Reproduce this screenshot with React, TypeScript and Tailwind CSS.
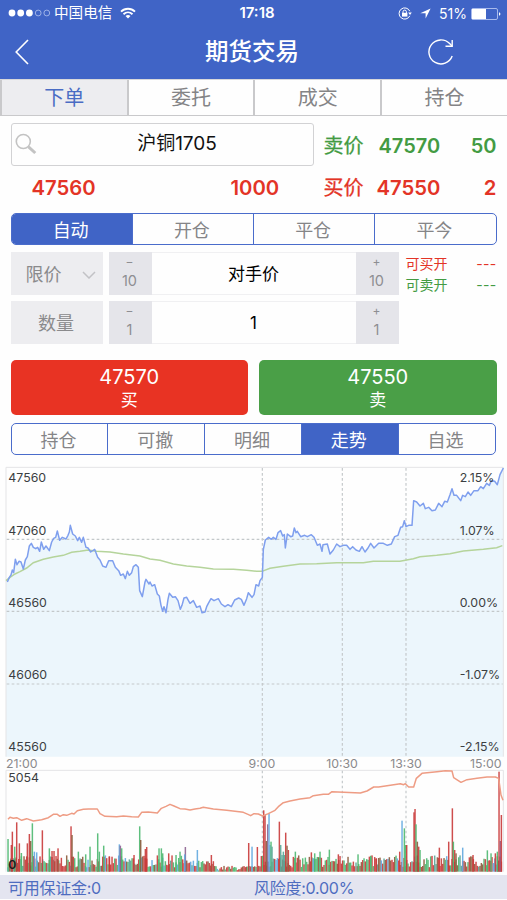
import React from "react";

/* Chart data lives in a 1521 x 1245 space, three units per pixel. */
const PRICE: number[][] = [
  [22,366],[28,352],[33,345],[37,330],[41,338],[46,298],[51,314],[57,304],[63,306],[70,327],[76,300],[82,290],[88,258],[94,250],[100,262],[107,266],[113,262],[119,274],[124,246],[131,268],[138,258],[148,272],[155,246],[161,235],[167,232],[172,213],[179,241],[187,232],[198,237],[204,226],[208,216],[211,196],[218,222],[226,228],[233,242],[238,232],[245,247],[250,232],[258,262],[264,264],[272,276],[284,268],[293,292],[300,300],[308,318],[318,322],[326,302],[338,302],[346,322],[356,332],[362,346],[370,342],[376,356],[382,334],[388,346],[395,338],[400,320],[408,314],[415,322],[419,392],[427,410],[435,366],[438,358],[447,372],[450,366],[456,378],[464,374],[472,402],[478,408],[483,436],[488,454],[492,440],[498,458],[504,418],[508,400],[518,412],[526,410],[534,422],[541,448],[546,436],[552,414],[560,412],[570,430],[580,422],[590,442],[600,438],[606,458],[615,456],[620,440],[625,430],[633,416],[642,422],[655,416],[664,432],[675,440],[684,434],[694,440],[704,420],[716,414],[724,418],[732,436],[740,416],[745,398],[756,412],[762,404],[768,374],[776,378],[780,362],
  [787,352],[790,268],[796,240],[806,232],[814,238],[820,232],[828,238],[834,218],[842,212],[848,228],[853,224],[856,264],[862,222],[872,230],[878,228],[883,204],[888,218],[892,214],[902,230],[914,226],[922,230],[934,224],[942,232],[952,256],[960,252],[966,274],[969,254],[982,252],[990,282],[1000,270],[1010,252],[1020,260],[1030,256],[1040,256],[1050,268],[1058,260],[1068,270],[1078,274],[1086,260],[1095,276],[1104,264],[1112,250],[1122,264],[1136,250],[1150,250],[1162,256],[1174,252],[1184,230],[1194,226],[1202,202],[1208,200],[1213,182],[1218,200],[1226,196],[1236,196],[1241,122],[1250,126],[1260,138],[1270,130],[1276,146],[1286,142],[1296,152],[1306,150],[1316,130],[1326,140],[1334,124],[1342,126],[1350,104],[1356,86],[1362,106],[1370,106],[1382,122],[1388,106],[1396,110],[1404,96],[1412,106],[1422,92],[1434,92],[1442,80],[1450,86],[1460,70],[1468,76],[1474,62],[1484,64],[1492,74],[1500,44],[1510,24],
];

const AVERAGE: number[][] = [
  [18,362],[30,352],[45,342],[60,335],[80,324],[100,308],[130,298],[160,291],[190,286],[215,277],[240,274],[265,270],[290,274],[330,276],[370,282],[420,288],[450,297],[480,301],[520,312],[560,318],[600,322],[640,327],[700,328],[740,331],[770,334],[786,334],[810,325],[850,319],[900,312],[950,311],[1010,308],[1090,308],[1120,304],[1200,304],[1240,296],[1260,290],[1310,286],[1350,281],[1390,273],[1450,268],[1490,263],[1507,257],
];

const OPEN_INTEREST: number[][] = [
  [24,1078],[30,1072],[40,1075],[50,1073],[65,1081],[80,1076],[100,1083],[125,1079],[145,1073],[160,1063],[172,1063],[180,1069],[190,1064],[200,1066],[215,1060],[222,1062],[232,1052],[250,1048],[265,1047],[292,1047],[300,1061],[315,1069],[350,1070],[370,1068],[395,1070],[415,1071],[425,1057],[445,1056],[472,1059],[484,1045],[498,1039],[510,1033],[522,1038],[540,1046],[555,1047],[570,1050],[585,1047],[600,1045],[610,1042],[640,1047],[680,1051],[730,1057],[744,1063],[752,1067],[762,1061],[775,1062],[788,1068],[805,1061],[825,1051],[835,1040],[850,1028],[870,1023],[900,1017],[930,1013],[940,1007],[970,1003],[985,1003],[996,995],[1031,997],[1081,999],[1101,993],[1121,981],[1136,981],[1161,977],[1201,971],[1211,974],[1216,971],[1226,981],[1241,981],[1249,955],[1266,940],[1311,935],[1336,932],[1356,933],[1361,953],[1383,967],[1401,959],[1431,955],[1461,951],[1486,951],[1496,955],[1503,1005],[1509,1021],
];

const RED = "#c93a3a";
const GREEN = "#4cb870";
const BROWN = "#8a5b3c";
const SKY = "#62a9df";
const PURPLE = "#8d6391";
const TEAL = "#5aa697";

type Bar = [number, number, string];

const PEAKS: Bar[] = [
  [24,98,GREEN],[34,80,RED],[37,120,RED],[44,75,GREEN],[50,148,RED],[58,85,RED],[64,56,GREEN],[82,85,RED],[88,113,RED],[92,92,BROWN],[97,145,GREEN],[103,60,SKY],[110,58,SKY],[127,124,RED],[148,70,GREEN],[156,62,RED],[162,62,RED],[174,70,RED],[213,136,RED],[216,110,BROWN],[235,60,GREEN],[257,52,GREEN],[270,75,GREEN],[293,115,GREEN],[298,60,GREEN],[311,78,GREEN],[328,46,RED],[358,82,SKY],[361,78,PURPLE],[365,70,GREEN],[402,50,RED],[419,136,GREEN],[422,95,BROWN],[436,68,RED],[440,74,RED],[477,70,GREEN],[484,70,GREEN],[488,55,GREEN],[506,55,RED],
  [528,50,GREEN],[540,60,GREEN],[556,74,PURPLE],[554,52,SKY],[592,65,SKY],[634,50,RED],[746,86,RED],[756,75,SKY],[772,74,RED],[791,184,RED],[795,170,RED],[799,92,BROWN],[803,142,PURPLE],[807,175,SKY],[810,80,SKY],[813,90,GREEN],[816,75,TEAL],[838,150,RED],[842,80,TEAL],[846,50,TEAL],[850,60,TEAL],[853,50,TEAL],[857,117,RED],[861,78,BROWN],[865,65,RED],[886,60,GREEN],[934,58,RED],[944,55,GREEN],[960,60,GREEN],[988,66,GREEN],
  [1015,52,RED],[1074,52,GREEN],[1113,45,GREEN],[1129,40,RED],[1199,60,RED],[1206,153,SKY],[1213,130,GREEN],[1217,80,GREEN],[1220,80,RED],[1242,178,RED],[1245,188,RED],[1248,142,GREEN],[1252,90,BROWN],[1256,75,RED],[1260,65,GREEN],[1318,72,RED],[1346,90,RED],[1357,190,RED],[1360,90,GREEN],[1364,65,RED],[1368,55,BROWN],[1388,72,SKY],[1419,50,RED],[1462,64,GREEN],[1473,55,GREEN],[1486,55,RED],[1492,60,GREEN],[1497,300,RED],[1501,92,PURPLE],[1504,170,RED],
];

/* Everyday volume between the peaks, from a fixed-seed generator. */
function quietBars(): Bar[] {
  const palette = [RED, GREEN, BROWN, GREEN, RED, TEAL, RED, BROWN, GREEN, RED, SKY];
  const bars: Bar[] = [];
  let seed = 7;
  const next = () => {
    seed = (seed * 16807) % 2147483647;
    return seed / 2147483647;
  };
  for (let x = 24; x < 1506; x += 4) {
    const quiet = x > 645 && x < 780;
    const early = x > 560 && x <= 645;
    const r = next();
    const h = quiet ? 4 + r * 14 : early ? 8 + r * 26 : 13 + r * 36;
    bars.push([x, h, palette[Math.floor(next() * palette.length)]]);
  }
  return bars;
}

const BARS = [...quietBars(), ...PEAKS];
const toPoints = (p: number[][]) => p.map(([x, y]) => `${x},${y}`).join(" ");

function Chart() {
  return (
    <svg viewBox="0 0 1521 1245" className="block h-[415px] w-[507px]" fill="none">
      <polygon points={`18,890 18,366 ${toPoints(PRICE)} 1510,890`} fill="#ecf6fc" />
      <path d="M18 890V22H1510V890M18 1235V931H1510V1235" stroke="#e4e4e6" strokeWidth="3" />
      <g stroke="#c3c8ca" strokeWidth="3.5" strokeDasharray="8 7">
        <path d="M20 238H1508M20 454H1508M20 672H1508" />
        <path d="M787 24V890M1027 24V890M1218 24V890" />
        <path d="M787 932V1235M1027 932V1235M1218 932V1235" />
      </g>
      <polyline points={toPoints(AVERAGE)} stroke="#b5d49b" strokeWidth="4.5" />
      <polyline points={toPoints(PRICE)} stroke="#7f9fee" strokeWidth="4.5" strokeLinejoin="round" />
      {BARS.map(([x, h, c], i) => (
        <rect key={i} x={x - 2.1} y={1235 - h} width="4.4" height={h} fill={c} opacity="0.9" />
      ))}
      <polyline points={toPoints(OPEN_INTEREST)} stroke="#ee9c84" strokeWidth="4.5" strokeLinejoin="round" />
      <g fill="#3b3e42" fontSize="37">
        <text x="25" y="66">47560</text>
        <text x="25" y="224">47060</text>
        <text x="25" y="441">46560</text>
        <text x="25" y="657">46060</text>
        <text x="25" y="873">45560</text>
        <text x="1379" y="66">2.15%</text>
        <text x="1379" y="224">1.07%</text>
        <text x="1379" y="441">0.00%</text>
        <text x="1379" y="657">-1.07%</text>
        <text x="1379" y="873">-2.15%</text>
        <text x="25" y="967">5054</text>
        <text x="25" y="1227" fill="#1c1c1c" fontWeight="600">0</text>
      </g>
      <g fill="#8a8a8c" fontSize="37">
        <text x="18" y="923">21:00</text>
        <text x="786" y="923" textAnchor="middle">9:00</text>
        <text x="1026" y="923" textAnchor="middle">10:30</text>
        <text x="1218" y="923" textAnchor="middle">13:30</text>
        <text x="1505" y="923" textAnchor="end">15:00</text>
      </g>
    </svg>
  );
}

function Segments({ items, active, className }: { items: string[]; active: number; className: string }) {
  return (
    <div className={`flex h-8 overflow-hidden rounded-[5px] border border-[#4a6ccb] text-[18px] ${className}`}>
      {items.map((label, i) => (
        <div
          key={label}
          className={`flex flex-1 items-center justify-center pr-0.5 pt-[2px] ${i > 0 ? "border-l border-[#4a6ccb]" : ""} ${
            i === active ? "bg-[#4064c6] text-white" : "text-[#858587]"
          }`}
        >
          {label}
        </div>
      ))}
    </div>
  );
}

function Step({ sign, amount }: { sign: string; amount: string }) {
  return (
    <div className="flex h-full w-[43px] flex-col items-center bg-[#e5e5ea] pr-px text-[#8e8e92]">
      <span className="mt-[3px] text-[12px] leading-[14px]">{sign}</span>
      <span className="mt-[3px] text-[14.5px] leading-[17px]">{amount}</span>
    </div>
  );
}

function Stepper({ amount, value }: { amount: string; value: string }) {
  return (
    <div className="ml-1.5 flex h-[43px] w-[290px]">
      <Step sign="−" amount={amount} />
      <div className="flex flex-1 items-center justify-center border-y border-[#f0f0f2] pt-0.5 text-[17px] text-black">{value}</div>
      <Step sign="+" amount={amount} />
    </div>
  );
}

export default function App() {
  return (
    <div className="h-[900px] w-[507px] overflow-hidden bg-[#fefefe] font-[Inter,'Noto_Sans_CJK_SC',sans-serif]">
      <header className="h-[79px] bg-[#4064c6] text-white">
        <div className="grid h-[27px] grid-cols-3 items-center pl-[8px] pr-[6px] text-[14px]">
          <div className="flex items-center">
            <svg viewBox="0 0 43 8" className="h-2 w-[43px]">
              <circle cx="4" cy="4" r="3.4" fill="white" />
              <circle cx="12.7" cy="4" r="3.4" fill="white" />
              <circle cx="21.4" cy="4" r="3.4" fill="white" />
              <circle cx="30.2" cy="4" r="2.9" fill="none" stroke="#b4c4ef" strokeWidth=".8" />
              <circle cx="38.8" cy="4" r="2.9" fill="none" stroke="#b4c4ef" strokeWidth=".8" />
            </svg>
            <span className="ml-[3px] pt-px text-[14.6px]">中国电信</span>
            <svg viewBox="0 0 16 12" className="ml-2 h-3 w-4" fill="none" stroke="white" strokeWidth="1.9">
              <path d="M1 4.6C5 .7 11 .7 15 4.6M3.5 7.2C6.2 4.7 9.8 4.7 12.5 7.2" />
              <path d="M8 11.6L5.5 8.9Q8 7 10.5 8.9Z" fill="white" stroke="none" />
            </svg>
          </div>
          <div className="pl-[5px] text-center text-[15px] font-semibold">17:18</div>
          <div className="flex items-center justify-end">
            <svg viewBox="0 0 14 13" className="h-[13px] w-3.5" fill="none" stroke="white" strokeWidth="1">
              <path d="M11.8 8.8A5.6 5.6 0 1 1 11.8 4.2" />
              <path d="M10.2 5.6H13.8L12 8Z" fill="white" stroke="none" />
              <path d="M5 6V4.8a1.7 1.7 0 0 1 3.4 0V6" />
              <rect x="4" y="5.8" width="5.4" height="3.8" fill="white" stroke="none" />
            </svg>
            <svg viewBox="0 0 11 11" className="ml-2 h-[11px] w-[11px]">
              <path d="M10.6.4L.3 5.2H5.6V10.6Z" fill="white" />
            </svg>
            <span className="ml-2 text-[14px]">51%</span>
            <svg viewBox="0 0 30 12" className="ml-1 h-3 w-[30px]">
              <rect x=".5" y=".5" width="26" height="11" rx="1.5" fill="none" stroke="#a8baec" />
              <rect x="1" y="1" width="14" height="10" fill="white" />
              <path d="M28 4L29.7 6L28 8Z" fill="white" />
            </svg>
          </div>
        </div>
        <div className="grid h-[50px] grid-cols-3 items-center">
          <svg viewBox="0 0 14 26" className="ml-[14.5px] h-[26px] w-3.5" fill="none" stroke="white" strokeWidth="1.6">
            <path d="M13 1L1.2 13L13 25" />
          </svg>
          <h1 className="mr-[3px] text-center text-[23.5px] font-medium leading-none">期货交易</h1>
          <svg viewBox="0 0 28 28" className="ml-[89px] h-7 w-7" fill="none" stroke="white" strokeWidth="1.4">
            <path d="M25.2 18.1A12 12 0 1 1 22.6 5.6L25 8" />
            <path d="M25.2 2V8.2H18.5" />
          </svg>
        </div>
      </header>

      <nav className="flex h-[37px] border-y border-b-[#c9c9cb] border-t-[#d8d8da] text-[20px] text-[#848486]">
        <div className="flex w-[128.5px] items-center justify-center border-x-2 border-[#c9c9cb] bg-[#ededf0] pt-px text-[#4a6cc4]">下单</div>
        <div className="flex flex-1 items-center justify-center border-r-2 border-[#c9c9cb] pt-px">委托</div>
        <div className="flex flex-1 items-center justify-center border-r-2 border-[#c9c9cb] pt-px">成交</div>
        <div className="flex flex-1 items-center justify-center pt-px">持仓</div>
      </nav>

      <section className="ml-[10.5px] mt-[7px] flex h-[43px] w-[486px] items-center">
        <div className="relative flex h-full w-[303px] items-center justify-center rounded-[3px] border border-[#d2d2d4] pl-[30px] text-[19px] text-[#111]">
          <svg viewBox="0 0 22 22" className="absolute left-[3px] top-[9px] h-[22px] w-[22px]" fill="none" stroke="#c3c3c3">
            <circle cx="8.3" cy="8.5" r="7" strokeWidth="1.6" />
            <path d="M13.5 13.8L20.3 20" strokeWidth="3" />
          </svg>
          沪铜1705
        </div>
        <div className="flex flex-1 items-center pt-[2px] text-[20px] text-[#439b43]">
          <span className="ml-[10px] w-[55px] [-webkit-text-stroke:0.3px]">卖价</span>
          <span className="font-semibold">47570</span>
          <span className="ml-auto font-semibold">50</span>
        </div>
      </section>

      <section className="ml-[10.5px] flex h-[43px] w-[486px] items-center pt-px text-[20.3px] font-semibold text-[#e33426]">
        <span className="ml-[21px] w-[199px]">47560</span>
        <span className="w-[81px]">1000</span>
        <span className="ml-[12px] w-[53px] text-[20px] font-normal [-webkit-text-stroke:0.3px]">买价</span>
        <span>47550</span>
        <span className="ml-auto">2</span>
      </section>

      <Segments items={["自动", "开仓", "平仓", "平今"]} active={0} className="ml-[10.5px] mt-1 w-[486px]" />

      <section className="ml-[10.5px] mt-[7px] flex w-[486px]">
        <div className="flex h-[43px] w-[92px] items-center bg-[#ededf0] pl-[15px] pt-0.5 text-[18px] text-[#8a8a8c]">
          限价
          <svg viewBox="0 0 14 8" className="ml-5 h-2 w-3.5" fill="none" stroke="#c2c2c6" strokeWidth="1.5">
            <path d="M1 1L7 7L13 1" />
          </svg>
        </div>
        <Stepper amount="10" value="对手价" />
        <div className="ml-[7px] flex flex-1 flex-col pt-[2px] text-[14px] leading-[20.5px]">
          <div className="flex justify-between text-[#e33426]"><span>可买开</span><span className="tracking-[0.3px]">---</span></div>
          <div className="flex justify-between text-[#439b43]"><span>可卖开</span><span className="tracking-[0.3px]">---</span></div>
        </div>
      </section>

      <section className="ml-[10.5px] mt-1.5 flex w-[486px]">
        <div className="flex h-[43px] w-[92px] items-center justify-center bg-[#ededf0] pr-px pt-0.5 text-[18px] text-[#8a8a8c]">数量</div>
        <Stepper amount="1" value="1" />
      </section>

      <section className="ml-[10.5px] mt-4 flex h-[55px] w-[486px] gap-[11px] text-white">
        <button className="flex flex-1 flex-col items-center rounded-[5px] bg-[#e83323] pt-[5px]">
          <span className="text-[20px] leading-[24px]">47570</span>
          <span className="text-[17px] leading-[22px]">买</span>
        </button>
        <button className="flex flex-1 flex-col items-center rounded-[5px] bg-[#4a9f47] pt-[5px]">
          <span className="text-[20px] leading-[24px]">47550</span>
          <span className="text-[17px] leading-[22px]">卖</span>
        </button>
      </section>

      <Segments items={["持仓", "可撤", "明细", "走势", "自选"]} active={3} className="ml-[10.5px] mt-2 w-[485px]" />

      <div className="mt-[5px]"><Chart /></div>

      <footer className="flex h-[24px] items-center bg-[#e4e5f0] pl-[8px] pt-px text-[16px] tracking-[-0.25px] text-[#4f6dc0]">
        <span className="w-[246px]">可用保证金:0</span>
        <span>风险度:0.00%</span>
      </footer>
    </div>
  );
}
